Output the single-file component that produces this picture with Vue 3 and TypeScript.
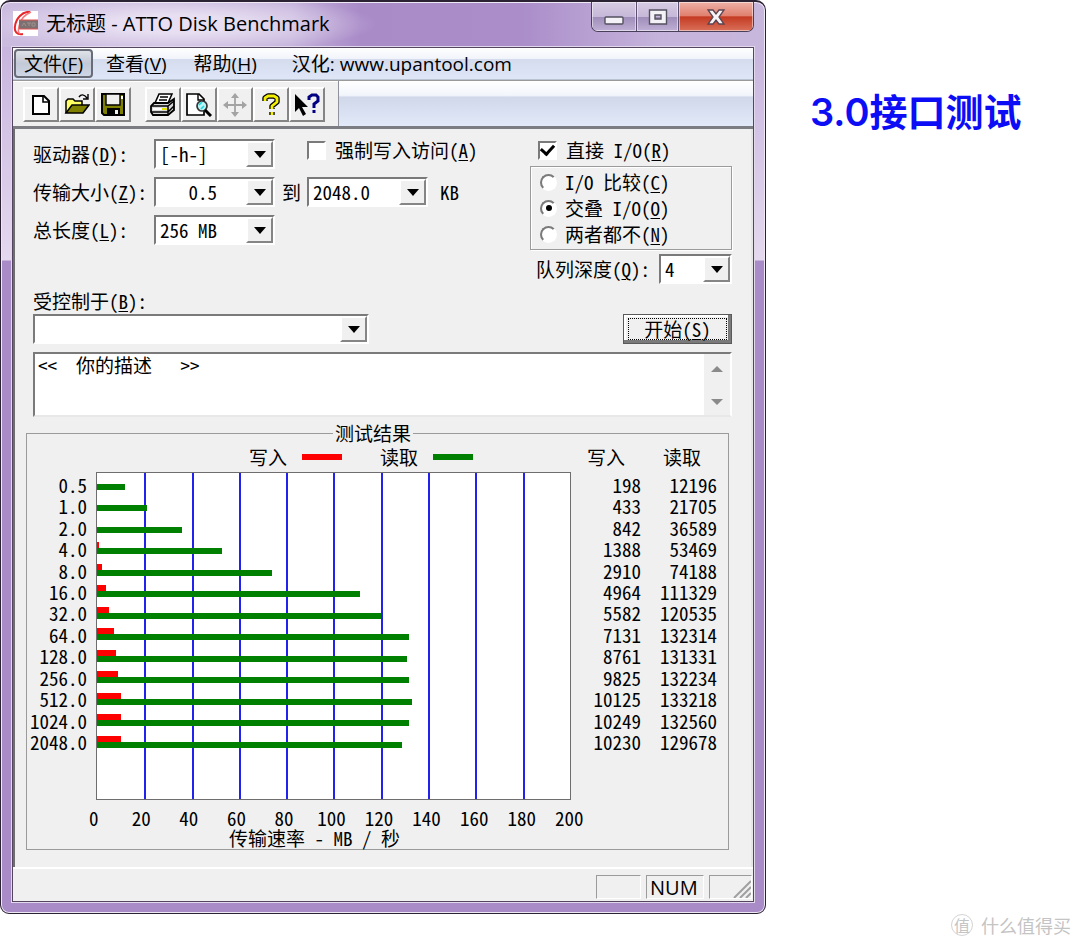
<script setup lang="ts">
import { ref } from 'vue'

interface Result {
  size: string
  write: number
  read: number
}

const results: Result[] = [
  { size: '0.5', write: 198, read: 12196 },
  { size: '1.0', write: 433, read: 21705 },
  { size: '2.0', write: 842, read: 36589 },
  { size: '4.0', write: 1388, read: 53469 },
  { size: '8.0', write: 2910, read: 74188 },
  { size: '16.0', write: 4964, read: 111329 },
  { size: '32.0', write: 5582, read: 120535 },
  { size: '64.0', write: 7131, read: 132314 },
  { size: '128.0', write: 8761, read: 131331 },
  { size: '256.0', write: 9825, read: 132234 },
  { size: '512.0', write: 10125, read: 133218 },
  { size: '1024.0', write: 10249, read: 132560 },
  { size: '2048.0', write: 10230, read: 129678 },
]

const ticks: number[] = [0, 20, 40, 60, 80, 100, 120, 140, 160, 180, 200]
const axisMax = 200

// Bars are drawn in whole MB/s steps.
const barWidth = (kb: number): string => `${(Math.floor(kb / 1000) / axisMax) * 100}%`

const forceWrite = ref<boolean>(false)
const directIo = ref<boolean>(true)
const ioMode = ref<string>('overlapped')
const description = ref<string>('<<\u00a0\u00a0你的描述\u00a0\u00a0\u00a0>>')
</script>

<template>
  <div class="page">
    <section class="window">
      <header class="titlebar">
        <svg class="app-icon" viewBox="0 0 25 25" aria-hidden="true">
          <rect width="25" height="25" fill="#fff" />
          <path d="M17 1C9 0 3 8 2 15c-1 6 2 9 8 8" fill="none" stroke="#e8262c" stroke-width="2" />
          <path d="M18 1C11 4 7 10 6 15s-1 6 1 8" fill="none" stroke="#f4777a" stroke-width="1.4" />
          <rect x="6" y="9" width="19" height="9" fill="#7d7070" />
          <path d="M6 9h19M6 18h19" stroke="#e45355" stroke-width="1" />
          <path d="M9 15l2-3 2 3M14 12h4M16 12v3M19 12h3v3h-3z" fill="none" stroke="#a09090" stroke-width="1" />
        </svg>
        <h1 class="title">无标题 - ATTO Disk Benchmark</h1>
        <div class="caption">
          <button type="button" class="cap min" aria-label="最小化">
            <svg viewBox="0 0 20 16"><rect x="1" y="8" width="18" height="7" rx="1" fill="#f4f2f6" stroke="#53505f" stroke-width="1.4" /></svg>
          </button>
          <button type="button" class="cap max" aria-label="最大化">
            <svg viewBox="0 0 20 16"><path d="M1.5 1h17v14h-17zM7 6v4h6V6z" fill="#f4f2f6" fill-rule="evenodd" stroke="#53505f" stroke-width="1.4" /></svg>
          </button>
          <button type="button" class="cap close" aria-label="关闭">
            <svg viewBox="0 0 20 16"><path d="M2 1h5l3 4 3-4h5l-5 7 5 7h-5l-3-4-3 4H2l5-7z" fill="#f6f4f6" stroke="#5c4450" stroke-width="1.3" /></svg>
          </button>
        </div>
      </header>

      <div class="client">
        <nav class="menubar">
          <button type="button" class="menu open">文件(<u>F</u>)</button>
          <button type="button" class="menu">查看(<u>V</u>)</button>
          <button type="button" class="menu">帮助(<u>H</u>)</button>
          <button type="button" class="menu site">汉化: www.upantool.com</button>
        </nav>

        <div class="toolrow">
          <div class="tools">
            <div class="group">
              <button type="button" class="tool" aria-label="新建">
                <svg viewBox="0 0 26 24"><path d="M5 3h11l5 5v13H5z" fill="#fff" stroke="#000" stroke-width="2" /><path d="M15 3v6h6" fill="none" stroke="#000" stroke-width="1.6" /></svg>
              </button>
              <button type="button" class="tool" aria-label="打开">
                <svg viewBox="0 0 26 24"><path d="M2 20V8l2-2h5l2 2h7v5" fill="#ffff63" stroke="#000" stroke-width="1.5" /><path d="M2 20l6-8h17l-6 8z" fill="#808000" stroke="#000" stroke-width="1.5" /><path d="M15 4c2-3 5-3 8 1M24 1v5h-5" fill="none" stroke="#000" stroke-width="1.4" /></svg>
              </button>
              <button type="button" class="tool" aria-label="保存">
                <svg viewBox="0 0 26 24"><path d="M2 1h22v21H4l-2-2z" fill="#808000" stroke="#000" stroke-width="2" /><path d="M6 1h14v11H6z" fill="#efefef" stroke="#000" stroke-width="1.4" /><path d="M7 15h13v7H7z" fill="#000" /><path d="M15 17h3v4h-3z" fill="#efefef" /><path d="M21 3h2v3h-2z" fill="#fff" /></svg>
              </button>
            </div>
            <div class="group">
              <button type="button" class="tool" aria-label="打印">
                <svg viewBox="0 0 26 24"><path d="M9 1h13l-4 9H5z" fill="#fff" stroke="#000" stroke-width="1.5" /><path d="M10 4h8M9 7h8" stroke="#000" stroke-width="1.3" /><path d="M4 10h14l6-4v11l-6 5H3l-2-3v-6z" fill="#d8d8d8" stroke="#000" stroke-width="1.8" /><path d="M1 13h17l6-5M1 19h17l6-6M18 13v8" fill="none" stroke="#000" stroke-width="1.5" /><path d="M3 15h14v2H3z" fill="#fff" /><path d="M12 15h5v2h-5z" fill="#e5e500" /></svg>
              </button>
              <button type="button" class="tool" aria-label="打印预览">
                <svg viewBox="0 0 26 24"><path d="M1 1h12l5 5v16H1z" fill="#fff" stroke="#000" stroke-width="1.7" /><path d="M12 1v6h6" fill="none" stroke="#000" stroke-width="1.4" /><circle cx="16" cy="13" r="5" fill="#b8f5f7" stroke="#333" stroke-width="1.7" /><path d="M13 12l3-3M15 16l3-3" stroke="#1ed5dd" stroke-width="1.6" /><path d="M19 17l6 6" stroke="#000" stroke-width="3" /></svg>
              </button>
              <button type="button" class="tool" aria-label="移动" disabled>
                <svg viewBox="0 0 26 24"><path d="M13 2v20M3 12h20" stroke="#a3a3a3" stroke-width="1.8" /><path d="M9 5l4-5 4 5zM9 19l4 5 4-5zM6 8l-5 4 5 4zM20 8l5 4-5 4z" fill="#a3a3a3" /></svg>
              </button>
              <button type="button" class="tool" aria-label="关于">
                <svg viewBox="0 0 26 24"><g fill="none" stroke-linejoin="round"><path d="M7 8V5l3-2h6l3 2v4l-5 4v3M14 19v3" stroke="#000" stroke-width="5.4" /><path d="M7 8V5l3-2h6l3 2v4l-5 4v3M14 19v3" stroke="#f4ee00" stroke-width="2.8" /></g></svg>
              </button>
              <button type="button" class="tool" aria-label="上下文帮助">
                <svg viewBox="0 0 26 24"><path d="M1 1v18l4-4 4 8 3-2-4-7h6z" fill="#000" /><path d="M15 7V4l3-2h4l2 2v4l-4 3v4M20 17v3" fill="none" stroke="#000080" stroke-width="3" /></svg>
              </button>
            </div>
          </div>
          <div class="band"></div>
        </div>

        <main class="view">
          <form class="form" @submit.prevent>
            <div class="options">
              <div class="left">
                <label for="drive">驱动器(<u>D</u>):</label>
                <span class="combo"><select id="drive"><option>[-h-]</option></select><i></i></span>
                <label class="check force"><input v-model="forceWrite" type="checkbox" /><span>强制写入访问(<u>A</u>)</span></label>

                <label for="from">传输大小(<u>Z</u>):</label>
                <span class="combo"><select id="from"><option>&nbsp;&nbsp;&nbsp;0.5</option></select><i></i></span>
                <label for="to" class="mid">到</label>
                <span class="combo"><select id="to"><option>2048.0</option></select><i></i></span>
                <span class="unit">KB</span>

                <label for="length">总长度(<u>L</u>):</label>
                <span class="combo"><select id="length"><option>256 MB</option></select><i></i></span>
              </div>

              <div class="right">
                <label class="check direct"><input v-model="directIo" type="checkbox" /><span>直接 I/O(<u>R</u>)</span></label>
                <div class="modes" role="radiogroup">
                  <label class="check"><input v-model="ioMode" type="radio" name="io" value="compare" /><span>I/O 比较(<u>C</u>)</span></label>
                  <label class="check"><input v-model="ioMode" type="radio" name="io" value="overlapped" /><span>交叠 I/O(<u>O</u>)</span></label>
                  <label class="check"><input v-model="ioMode" type="radio" name="io" value="neither" /><span>两者都不(<u>N</u>)</span></label>
                </div>
                <div class="queue">
                  <label for="depth">队列深度(<u>Q</u>):</label>
                  <span class="combo"><select id="depth"><option>4</option></select><i></i></span>
                </div>
              </div>
            </div>

            <label for="controlled" class="controlled">受控制于(<u>B</u>):</label>
            <div class="run">
              <span class="combo"><select id="controlled"><option></option></select><i></i></span>
              <button type="submit" class="start"><span>开始(<u>S</u>)</span></button>
            </div>

            <div class="memo">
              <textarea v-model="description" aria-label="描述" rows="2"></textarea>
              <div class="scroll" aria-hidden="true"><i class="up"></i><i class="down"></i></div>
            </div>
          </form>

          <fieldset class="results">
            <legend>测试结果</legend>
            <div class="chart">
              <div class="key">
                <span>写入</span><i class="swatch write"></i>
                <span class="second">读取</span><i class="swatch read"></i>
              </div>
              <div class="sizes">
                <span v-for="r in results" :key="r.size">{{ r.size }}</span>
              </div>
              <div class="plot">
                <div class="grid"><i v-for="t in 10" :key="t"></i></div>
                <div class="bars">
                  <div v-for="r in results" :key="r.size" class="bar">
                    <i class="write" :style="{ width: barWidth(r.write) }"></i>
                    <i class="read" :style="{ width: barWidth(r.read) }"></i>
                  </div>
                </div>
              </div>
              <div class="axis">
                <span v-for="t in ticks" :key="t">{{ t }}</span>
              </div>
              <div class="axis-title">传输速率 - MB / 秒</div>
            </div>
            <table class="values">
              <thead>
                <tr><th scope="col">写入</th><th scope="col">读取</th></tr>
              </thead>
              <tbody>
                <tr v-for="r in results" :key="r.size">
                  <td>{{ r.write }}</td>
                  <td>{{ r.read }}</td>
                </tr>
              </tbody>
            </table>
          </fieldset>
        </main>

        <footer class="status">
          <span class="pane"></span>
          <span class="pane num">NUM</span>
          <span class="pane grip">
            <svg viewBox="0 0 18 18" aria-hidden="true"><path d="M1 18L18 1M7 18L18 7M13 18l5-5" stroke="#a0a0a0" stroke-width="2" /></svg>
          </span>
        </footer>
      </div>
    </section>

    <aside class="side">
      <h2>3.0接口测试</h2>
      <p class="mark"><span class="seal">值</span>什么值得买</p>
    </aside>
  </div>
</template>

<style>
body {
  margin: 0;
  background: #fff;
}
</style>

<style scoped>
* {
  box-sizing: border-box;
}

.page {
  display: flex;
  align-items: flex-start;
  min-height: 100vh;
  color: #000;
  font-family: "Noto Sans CJK SC", sans-serif;
}

button,
select,
textarea {
  font: inherit;
  font-feature-settings: inherit;
  color: inherit;
  margin: 0;
}

/* Window frame */
.window {
  flex: 1;
  min-width: 0;
  padding: 0 11px 11px;
  border: 1px solid #2b2233;
  border-top-width: 2px;
  border-radius: 10px 10px 9px 9px;
  background:
    radial-gradient(ellipse 200px 30px at 175px 22px, rgba(240, 234, 247, 0.8) 30%, rgba(240, 234, 247, 0) 100%) no-repeat,
    linear-gradient(90deg, #cbbbdf 0%, #c3b0da 38%, #a98bc8 47%, #aa8dc9 68%, #c5b3db 86%, #c8b7dd 100%) top / 100% 45px no-repeat,
    linear-gradient(#c8b5de 44px, #e4d9ef 258px, #a98bc8 259px);
  box-shadow: inset 0 0 0 1px #efe8f5;
}

.titlebar {
  display: flex;
  align-items: flex-start;
  height: 45px;
  padding-left: 1px;
}

.app-icon {
  width: 25px;
  height: 25px;
  margin-top: 9px;
}

.title {
  flex: 1;
  margin: 6px 0 0 8px;
  font: 400 20px/32px "Open Sans", "Noto Sans CJK SC", sans-serif;
  white-space: nowrap;
}

.caption {
  display: flex;
  height: 30px;
  overflow: hidden;
  border: 1px solid #4a3f5a;
  border-top: 0;
  border-radius: 0 0 7px 7px;
}

.cap {
  display: flex;
  align-items: center;
  justify-content: center;
  width: 45px;
  padding: 0;
  border: 0;
  border-right: 1px solid #5b5070;
  background: linear-gradient(#d6cbe3, #c6b8d8 50%, #9d8cb8 51%, #c0b0d5);
  box-shadow: inset 0 0 0 1px rgba(255, 255, 255, 0.5);
}

.cap.max {
  width: 42px;
}

.cap.close {
  width: 74px;
  border-right: 0;
  background: linear-gradient(#eeb0a6, #e0806f 48%, #c43a22 51%, #d9705a);
}

.cap svg {
  width: 20px;
  height: 16px;
}

.client {
  border: 1px solid #54465f;
  background: #f0f0f0;
  box-shadow: 0 0 0 1px #e2d8ec;
}

/* Menu and toolbar */
.menubar {
  display: flex;
  height: 32px;
  padding: 1px 1px 1px;
  border-bottom: 1px solid #b9c3d4;
  background: linear-gradient(#fff, #f1f4fa 34%, #d5dced 36%, #dfe6f6);
  font: 400 19px/28px "Open Sans", "Noto Sans CJK SC", sans-serif;
}

.menu {
  padding: 0 9px;
  border: 1px solid transparent;
  border-radius: 4px;
  background: none;
  white-space: nowrap;
}

.menu.open {
  border: 2px solid #686c78;
  padding: 0 8px;
  line-height: 24px;
  margin-right: 3px;
  background: linear-gradient(#dfe2e8, #c3c9d6 50%, #cfd6e6);
}

.menu + .menu {
  margin-right: 7px;
}

.menu.site {
  margin-left: 8px;
}

u {
  text-decoration-thickness: 1px;
  text-underline-offset: 2px;
}

.toolrow {
  display: flex;
  height: 49px;
  border-top: 1px solid #9a9a9a;
  border-bottom: 3px solid #7b7d82;
}

.tools {
  display: flex;
  gap: 14px;
  padding: 6px 13px 0 10px;
  border-right: 1px solid #8d929c;
  box-shadow: inset 0 1px #fff;
}

.group {
  display: flex;
}

.tool {
  display: flex;
  align-items: center;
  justify-content: center;
  width: 36px;
  height: 35px;
  padding: 0;
  border: 2px solid;
  border-color: #fff #858585 #858585 #fff;
  background: #f0f0f0;
}

.tool svg {
  width: 26px;
  height: 24px;
}

.band {
  flex: 1;
  background: linear-gradient(#fff, #f2f5fb 32%, #d0d8ea 36%, #d8dff0 65%, #e2e9f8);
}

/* View */
.view {
  display: flow-root;
  padding: 10px 19px 17px 18px;
  border: solid #6e6e6e;
  border-width: 0 2px;
  border-right-color: #e6e6e6;
  font-size: 19px;
  line-height: 22px;
  font-feature-settings: "hwid";
}

.options {
  display: flex;
  justify-content: space-between;
}

.left {
  display: grid;
  grid-template-columns: 121px 121px 32px 121px auto;
  grid-template-rows: 30px 30px 30px;
  row-gap: 8px;
  align-items: center;
  white-space: nowrap;
}

.combo {
  display: grid;
  height: 30px;
  border: 2px solid;
  border-color: #7a7a7a #fff #fff #7a7a7a;
  background: #fff;
}

.combo select {
  grid-area: 1 / 1;
  width: 100%;
  min-width: 0;
  padding: 0 0 0 4px;
  border: 0;
  border-radius: 0;
  outline: 0;
  appearance: none;
  background: #fff;
}

.combo i {
  grid-area: 1 / 1;
  justify-self: end;
  display: flex;
  align-items: center;
  justify-content: center;
  width: 27px;
  border: 2px solid;
  border-color: #fff #858585 #858585 #fff;
  background: #f0f0f0;
  pointer-events: none;
  z-index: 1;
}

.combo i::before {
  content: "";
  border: 6px solid transparent;
  border-top: 7px solid #000;
  border-bottom: 0;
}

.mid {
  padding-left: 7px;
}

.unit {
  padding-left: 12px;
}

.check {
  display: flex;
  align-items: center;
  gap: 9px;
  white-space: nowrap;
}

.force {
  grid-column: 4 / 6;
  align-self: start;
}

.check input {
  flex: none;
  display: grid;
  place-items: center;
  width: 19px;
  height: 19px;
  margin: 0;
  appearance: none;
  border: 2px solid;
  border-color: #7a7a7a #fff #fff #7a7a7a;
  background: #fff;
}

.check input[type="checkbox"]:checked::before {
  content: "";
  width: 6px;
  height: 10px;
  margin-top: -3px;
  border: solid #000;
  border-width: 0 3px 3px 0;
  transform: rotate(42deg);
}

.check input[type="radio"] {
  width: 17px;
  height: 17px;
  border-radius: 50%;
}

.check input[type="radio"]:checked::before {
  content: "";
  width: 6px;
  height: 6px;
  border-radius: 50%;
  background: #000;
}

.right {
  width: 202px;
}

.direct {
  padding-left: 8px;
}

.modes {
  display: grid;
  gap: 4px;
  height: 84px;
  margin: 5px 0 4px;
  padding: 4px 9px;
  border: 1px solid #9b9b9b;
  box-shadow: 1px 1px #fff, inset 1px 1px #fff;
}

.modes .check {
  gap: 8px;
}

.queue {
  display: flex;
  align-items: center;
  justify-content: space-between;
  padding-left: 6px;
  white-space: nowrap;
}

.queue .combo {
  width: 73px;
}

.controlled {
  display: block;
  margin-top: 6px;
}

.run {
  display: flex;
  justify-content: space-between;
  margin-top: 2px;
}

.run .combo {
  width: 336px;
}

.start {
  width: 109px;
  height: 30px;
  padding: 3px;
  border: 1px solid #5a5a5a;
  background: #f0f0f0;
  box-shadow: inset -3px -3px #7a7a7a, inset 2px 2px #fff;
}

.start span {
  display: block;
  margin: 0 2px;
  outline: 1px dotted #000;
  line-height: 20px;
}

.memo {
  display: flex;
  height: 65px;
  margin-top: 8px;
  border: 2px solid;
  border-color: #7a7a7a #fff #e8e8e8 #7a7a7a;
  background: #fff;
}

.memo textarea {
  flex: 1;
  min-width: 0;
  padding: 0 3px;
  border: 0;
  outline: 0;
  overflow: hidden;
  resize: none;
  background: #fff;
}

.scroll {
  display: flex;
  flex-direction: column;
  align-items: center;
  justify-content: space-between;
  width: 26px;
  padding: 12px 0 10px;
  background: #f0f0f0;
}

.scroll i {
  border: 6px solid transparent;
}

.scroll .up {
  border-top: 0;
  border-bottom-color: #8a8a8a;
}

.scroll .down {
  border-bottom: 0;
  border-top-color: #8a8a8a;
}

/* Results */
.results {
  display: flex;
  min-width: 0;
  margin: 5px 3px 0 -7px;
  padding: 2px 11px 1px 2px;
  border: 1px solid #9b9b9b;
}

.results legend {
  margin: 0 auto;
  padding: 0 2px;
}

.chart {
  flex: 1;
  display: grid;
  grid-template-columns: 67px minmax(0, 1fr);
  grid-template-rows: 26px 328px auto auto;
}

.key {
  grid-column: 1 / 3;
  display: flex;
  align-items: flex-start;
  padding-left: 220px;
}

.swatch {
  width: 40px;
  height: 6px;
  margin: 8px 0 0 15px;
}

.second {
  margin-left: 38px;
}

.write {
  background: #f00;
}

.read {
  background: #008000;
}

.sizes {
  grid-column: 1;
  display: grid;
  grid-auto-rows: 1fr;
  height: 279px;
  margin-top: 2px;
  padding-right: 9px;
  justify-items: end;
  align-items: center;
}

.sizes span {
  line-height: 20px;
}

.plot {
  display: grid;
  border: 1px solid #6e6e6e;
  background: #fff;
}

.grid,
.bars {
  grid-area: 1 / 1;
}

.grid {
  display: grid;
  grid-template-columns: repeat(10, 1fr);
}

.grid i + i {
  border-left: 2px solid #2222ee;
}

.bars {
  display: grid;
  grid-auto-rows: 1fr;
  height: 279px;
  margin-top: 2px;
}

.bar {
  padding-top: 3px;
}

.bar i {
  display: block;
  height: 6px;
}

.axis {
  grid-column: 2;
  display: grid;
  grid-template-columns: repeat(11, 1fr);
  margin: 8px -22px 0 -26px;
  line-height: 20px;
  text-align: center;
}

.axis-title {
  grid-column: 2;
  padding-right: 38px;
  line-height: 20px;
  text-align: center;
}

.values {
  align-self: flex-start;
  height: 307px;
  border-collapse: collapse;
}

.values th,
.values td {
  width: 76px;
  padding: 0;
  font-weight: 400;
  text-align: right;
  line-height: 20px;
}

.values th:first-child,
.values td:first-child {
  width: 70px;
}

.values th {
  height: 28px;
  padding-right: 16px;
  vertical-align: top;
  line-height: 22px;
}

/* Status bar */
.status {
  display: flex;
  justify-content: flex-end;
  gap: 5px;
  height: 34px;
  padding: 6px 1px 2px 0;
  border-top: 2px solid #fff;
}

.pane {
  width: 45px;
  border: 1px solid;
  border-color: #9b9b9b #fff #fff #9b9b9b;
}

.num {
  width: 58px;
  padding-left: 3px;
  font: 400 20px/24px "Open Sans", sans-serif;
}

.grip {
  display: flex;
  align-items: flex-end;
  justify-content: flex-end;
  width: 43px;
}

.grip svg {
  width: 18px;
  height: 18px;
}

/* Side column */
.side {
  display: flex;
  flex-direction: column;
  justify-content: space-between;
  width: 314px;
  min-height: 100vh;
  padding: 84px 9px 10px 44px;
}

.side h2 {
  margin: 0;
  color: #0d0df5;
  font: 600 38px/56px Inter, "Noto Sans CJK SC", sans-serif;
  white-space: nowrap;
}

.mark {
  display: flex;
  align-items: center;
  justify-content: flex-end;
  gap: 8px;
  margin: 0;
  color: #c4c4c4;
  font-size: 18px;
  line-height: 26px;
}

.seal {
  width: 22px;
  height: 22px;
  border: 1px solid #d4d4d4;
  border-radius: 50%;
  font-size: 16px;
  line-height: 20px;
  text-align: center;
}
</style>
